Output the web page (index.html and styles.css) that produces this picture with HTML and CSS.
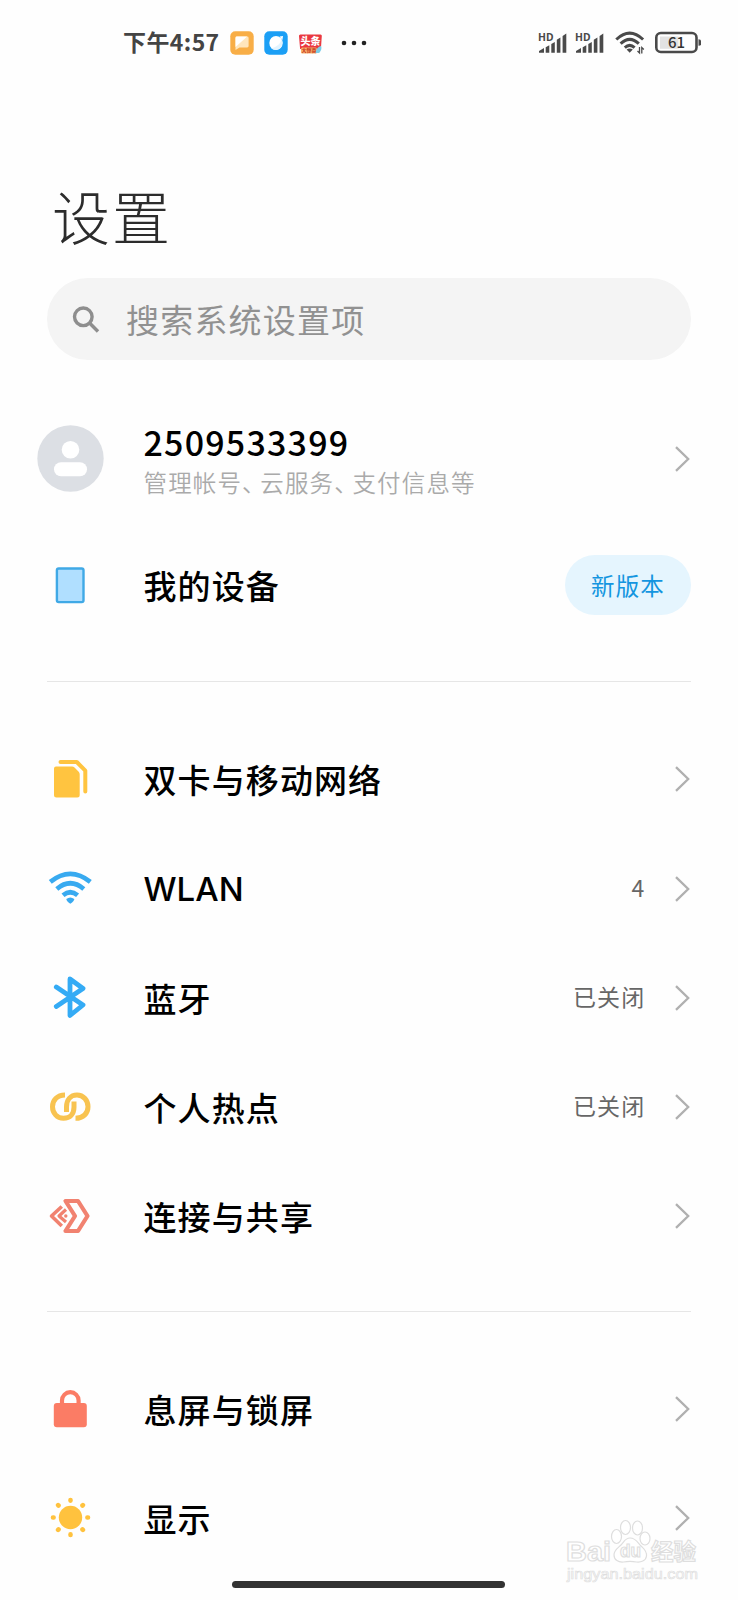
FILE: index.html
```html
<!DOCTYPE html>
<html lang="zh-CN">
<head>
<meta charset="utf-8">
<title>设置</title>
<link rel="stylesheet" href="styles.css">
</head>
<body>
<svg class="defs" width="0" height="0">
  <symbol id="chevron" viewBox="0 0 16 28"><path d="M2 2.200 14.200 14 2 25.800" fill="none" stroke="#b0b0b0" stroke-width="2.300"/></symbol>
</svg>
<div class="screen">
  <header class="status">
    <span class="time">下午4:57</span>
    <svg class="app" width="24" height="24" viewBox="0 0 24 24"><rect x=".3" y=".3" width="23.400" height="23.400" rx="5" fill="#f8ae47"/><path d="M5.500 7q0-1.400 1.400-1.400h10.300q1.400 0 1.400 1.400v8q0 1.400-1.400 1.400H9.500L5.500 19z" fill="#ffe6bd"/><path d="M5.500 16V7q0-1.400 1.400-1.400h10.300z" fill="#fff"/></svg>
    <svg class="app" width="24" height="24" viewBox="0 0 24 24"><rect x=".3" y=".3" width="23.400" height="23.400" rx="5" fill="#1b9ff5"/><ellipse cx="12" cy="12" rx="6.700" ry="7" fill="#fff"/><path d="M18 8q-3 8-11 9.500 3 1.800 6 1.300 7-2.300 5-10.800z" fill="#e2f4ff"/><path d="M15.500 5.400l3.500-.4-.6 4z" fill="#fff"/></svg>
    <svg class="app" width="25" height="24" viewBox="0 0 25 24"><path d="M2.500 3.500h20q1.500 0 1.300 1.500L22.900 18H2.100L1 5q-.2-1.500 1.500-1.500z" fill="#ea3840"/><text x="12.500" y="14" text-anchor="middle" class="news">头条</text><rect x="3" y="16.400" width="16" height="6" rx="1.500" fill="#f9b06a"/><text x="11" y="21.300" text-anchor="middle" class="news-sub">大惊喜</text><path d="M17.500 22q1-6 5.500-7 1.500 3-1.800 7z" fill="#7acde8"/></svg>
    <svg class="dots" width="26" height="6" viewBox="0 0 26 6"><g fill="#222"><circle cx="3" cy="3" r="2.300"/><circle cx="13" cy="3" r="2.300"/><circle cx="23" cy="3" r="2.300"/></g></svg>
    <span class="grow"></span>
    <svg class="sig" width="32" height="24" viewBox="0 0 32 24"><path d="M2 21.700v-1.600l5-3v4.600zM8.700 16.200l3.600-1.900v7.400H8.700zM14.300 13l3.500-2v10.700h-3.500zM19.800 8.800l3.600-2.200v15.100h-3.600zM25.600 4.900l3.700-2.400v19.200h-3.700z" fill="#4a4a4a"/><text x="1" y="9.500" class="hd" textLength="15.500" lengthAdjust="spacingAndGlyphs">HD</text></svg>
    <svg class="sig second" width="32" height="24" viewBox="0 0 32 24"><path d="M2 21.700v-1.600l5-3v4.600zM8.700 16.200l3.600-1.900v7.400H8.700zM14.300 13l3.500-2v10.700h-3.500zM19.800 8.800l3.600-2.200v15.100h-3.600zM25.600 4.900l3.700-2.400v19.200h-3.700z" fill="#4a4a4a"/><text x="1" y="9.500" class="hd" textLength="15.500" lengthAdjust="spacingAndGlyphs">HD</text></svg>
    <svg class="swifi" width="30" height="25" viewBox="0 0 30 25"><g fill="none" stroke="#4a4a4a" stroke-width="3"><path d="M1.300 9.500Q14.700-3.300 28.100 9.500"/><path d="M5.600 13.600q9.100-8.600 18.200 0"/><path d="M9.800 17.600q4.900-4.600 9.800 0"/></g><path d="M11.600 19.600q3.100-2.400 6.200 0l-3.100 3.200z" fill="#4a4a4a"/><path d="M24.500 17v6l-2-2M26.800 23.500v-6l2 2" fill="none" stroke="#4a4a4a" stroke-width="1.300"/></svg>
    <svg class="battery" width="48" height="24" viewBox="0 0 48 24"><rect x="1.300" y="2" width="40.200" height="19" rx="4.500" fill="#fff" stroke="#4a4a4a" stroke-width="2.600"/><path d="M5 5.500h18.500v12.300H5z" fill="#e2e2e2"/><path d="M43.500 8.300q2.500 0 2.500 1.500v3.500q0 1.500-2.500 1.500z" fill="#4a4a4a"/><text x="21.500" y="16.700" text-anchor="middle" class="level">61</text></svg>
  </header>

  <h1 class="title">设置</h1>

  <div class="search">
    <svg width="28" height="28" viewBox="0 0 28 28"><g fill="none" stroke="#8e8e8e" stroke-width="3.400"><circle cx="11.300" cy="11.800" r="8.800"/><path d="M17.800 18.300 26 26.500"/></g></svg>
    <span>搜索系统设置项</span>
  </div>

  <ul class="list account">
    <li class="row">
      <div class="icon"><svg class="avatar" width="67" height="67" viewBox="0 0 67 67"><circle cx="33.500" cy="33.500" r="33.200" fill="#dcdfe4"/><circle cx="33.500" cy="24.800" r="8.800" fill="#fff"/><rect x="17" y="37.300" width="33" height="14" rx="7" fill="#fff"/></svg></div>
      <div class="text"><div class="label number">2509533399</div><div class="sub">管理帐号<span class="tight">、</span>云服务<span class="tight">、</span>支付信息等</div></div>
      <svg class="chev" width="16" height="28"><use href="#chevron"/></svg>
    </li>
    <li class="row device">
      <div class="icon"><svg width="48" height="48" viewBox="0 0 48 48"><rect x="10.900" y="7.500" width="26.600" height="33.600" rx="1.800" fill="#b0dfff" stroke="#40a9e6" stroke-width="2.400"/></svg></div>
      <div class="label text">我的设备</div>
      <span class="badge">新版本</span>
    </li>
  </ul>

  <ul class="list">
    <li class="row">
      <div class="icon"><svg width="48" height="48" viewBox="0 0 48 48"><path d="M10 11.500h16q1.500 0 2.500 1l4.200 4.200q1 1 1 2.500V40q0 2.500-2.500 2.500H10.500Q8 42.500 8 40V13.500q0-2 2-2z" fill="#ffc440"/><path d="M14.500 7h16.300l8.500 8.600V36.500" fill="none" stroke="#ffc440" stroke-width="4" stroke-linecap="round" stroke-linejoin="round"/></svg></div>
      <div class="label text">双卡与移动网络</div>
      <svg class="chev" width="16" height="28"><use href="#chevron"/></svg>
    </li>
    <li class="row">
      <div class="icon"><svg width="48" height="48" viewBox="0 0 48 48"><g fill="none" stroke="#38aaf0" stroke-width="4.700"><path d="M4.300 16.800Q24.300 .8 44.300 16.800"/><path d="M10.800 24q13.500-11.500 27 0"/><path d="M17 30.200q7.300-6 14.600 0"/></g><path d="M20.300 34q4-3 8 0 0 2.200-4 4.700-4-2.500-4-4.700z" fill="#38aaf0"/></svg></div>
      <div class="label text latin">WLAN</div>
      <span class="value">4</span>
      <svg class="chev" width="16" height="28"><use href="#chevron"/></svg>
    </li>
    <li class="row">
      <div class="icon"><svg width="48" height="48" viewBox="0 0 48 48"><path d="M10.300 13 37 31 24 41.500V5L37 14.500 10.300 32.500" fill="none" stroke="#34abf5" stroke-width="4.800" stroke-linecap="round" stroke-linejoin="round"/></svg></div>
      <div class="label text">蓝牙</div>
      <span class="value">已关闭</span>
      <svg class="chev" width="16" height="28"><use href="#chevron"/></svg>
    </li>
    <li class="row">
      <div class="icon"><svg width="48" height="48" viewBox="0 0 48 48"><g fill="none" stroke="#f8c350" stroke-width="5"><path d="M19 12C11 12 6.500 17.500 6.500 23.700S11 35.300 17.500 35.300 28 31 28 24v-5.500"/><path d="M29.500 35.300C37.500 35.300 42 30 42 23.700S37.500 12 31 12 20.500 17 20.500 24v5"/></g></svg></div>
      <div class="label text">个人热点</div>
      <span class="value">已关闭</span>
      <svg class="chev" width="16" height="28"><use href="#chevron"/></svg>
    </li>
    <li class="row">
      <div class="icon"><svg width="48" height="48" viewBox="0 0 48 48"><g fill="none" stroke="#f18270" stroke-width="4.200" stroke-linejoin="round"><path d="M19.500 9h12.500l9.500 15-9.500 15H19.500l9.500-15z"/><path d="M15.800 14.500 5.500 24l10.300 10" stroke-width="3.600"/><path d="M20 17.500 13 24l7 6" stroke-width="3.200"/></g><circle cx="19.800" cy="24" r="1.700" fill="#f18270"/></svg></div>
      <div class="label text">连接与共享</div>
      <svg class="chev" width="16" height="28"><use href="#chevron"/></svg>
    </li>
  </ul>

  <ul class="list last">
    <li class="row">
      <div class="icon"><svg width="48" height="48" viewBox="0 0 48 48"><rect x="7.800" y="18" width="33" height="24.200" rx="3" fill="#fb7c65"/><path d="M16 20v-4.500a8.300 8.300 0 0 1 16.600 0V20" fill="none" stroke="#fb7c65" stroke-width="4.200"/></svg></div>
      <div class="label text">息屏与锁屏</div>
      <svg class="chev" width="16" height="28"><use href="#chevron"/></svg>
    </li>
    <li class="row">
      <div class="icon"><svg width="48" height="48" viewBox="0 0 48 48"><circle cx="24.500" cy="23.500" r="11.700" fill="#ffc23e"/><path d="M24.500 6v.6M24.500 40.400v.6M7 23.500h.6M41.400 23.500h.6M12.100 11.100l.4.400M36.500 35.500l.4.400M12.100 35.900l.4-.4M36.500 11.500l.4-.4" stroke="#ffc23e" stroke-width="4.600" stroke-linecap="round"/></svg></div>
      <div class="label text">显示</div>
      <svg class="chev" width="16" height="28"><use href="#chevron"/></svg>
    </li>
  </ul>

  <svg class="watermark" width="150" height="70" viewBox="0 0 150 70">
    <g fill="#fff" stroke="#dedede" stroke-width="1.200">
      <text x="4" y="42" class="wm-brand" textLength="45" lengthAdjust="spacingAndGlyphs">Bai</text>
      <ellipse cx="54.500" cy="17.500" rx="5" ry="7"/><ellipse cx="63.500" cy="8.500" rx="5" ry="7"/><ellipse cx="75.500" cy="9" rx="5" ry="7"/><ellipse cx="83" cy="19.500" rx="5" ry="6.500"/>
      <path d="M68 19c6 0 8 5 11 8s6 5 5.500 10-6 6.500-10 6c-5-1-8-1-13 0-5 .5-9.500-2-9.500-7s4-7 7-10 4-7 9-7z"/>
      <text x="58" y="38" class="wm-du" textLength="21" lengthAdjust="spacingAndGlyphs">du</text>
      <text x="89" y="41" class="wm-cn" textLength="45" lengthAdjust="spacingAndGlyphs">经验</text>
      <text x="5" y="60" class="wm-url" textLength="131" lengthAdjust="spacingAndGlyphs">jingyan.baidu.com</text>
    </g>
  </svg>
  <div class="home"></div>
</div>
</body>
</html>
```
FILE: styles.css
```css
* { box-sizing: border-box; }
body {
  margin: 0;
  background: #fefefe;
  font-family: "Noto Sans CJK SC", "Noto Sans", sans-serif;
  color: #000;
}
.defs { position: absolute; }
.screen {
  position: relative;
  width: 738px;
  height: 1600px;
  overflow: hidden;
}
.status {
  display: flex;
  align-items: center;
  height: 85px;
  padding: 0 35px 0 123px;
}
.time {
  width: 107px;
  margin-top: -3px;
  font-size: 23px;
  font-weight: 700;
  letter-spacing: 0.4px;
  line-height: 30px;
  color: #444;
  white-space: nowrap;
}
.app { margin-right: 10px; }
.dots { margin-left: 8px; }
.grow { flex: 1; }
.sig { margin-right: 5px; }
.second { margin-right: 9px; }
.swifi { margin-right: 10px; }
.hd { font: 700 10.5px "Noto Sans", sans-serif; fill: #4a4a4a; }
.news { font: 900 10px "Noto Sans CJK SC", sans-serif; fill: #fff; }
.news-sub { font: 700 5px "Noto Sans CJK SC", sans-serif; fill: #c2331c; }
.level { font: 500 15px "Noto Sans CJK SC", sans-serif; fill: #333; }
.title {
  height: 193px;
  margin: 0;
  padding: 86px 0 0 52px;
  font-size: 58px;
  font-weight: 300;
  line-height: 88px;
  letter-spacing: 2px;
  color: #2c2c2c;
}
.search {
  display: flex;
  align-items: center;
  gap: 26px;
  height: 82px;
  margin: 0 47px;
  padding: 0 0 0 25px;
  border-radius: 41px;
  background: #f4f4f4;
  font-size: 33px;
  font-weight: 400;
  letter-spacing: 1.2px;
  color: #919191;
}
.list {
  margin: 0 47px;
  padding: 43px 0 40px;
  border-top: 1px solid #e6e6e6;
  list-style: none;
}
.account {
  padding: 44px 0 41px;
  border-top: 0;
}
.last { padding-top: 42px; }
.row {
  display: flex;
  align-items: center;
  height: 109.3px;
}
.device { margin-top: 17px; }
.icon {
  display: flex;
  justify-content: center;
  width: 48px;
  margin: 0 49.5px 0 -1px;
}
.avatar { flex: none; }
.text { flex: 1; }
.chev { margin-right: 1.5px; }
.label {
  font-size: 33px;
  font-weight: 500;
  letter-spacing: 1.1px;
  line-height: 48px;
}
.latin {
  font-family: Inter, "Noto Sans CJK SC", sans-serif;
  letter-spacing: 0;
}
.number {
  margin-top: 6px;
  font-size: 34px;
  line-height: 36px;
  letter-spacing: 1.2px;
}
.sub {
  font-size: 23.5px;
  font-weight: 350;
  letter-spacing: 1.15px;
  line-height: 36px;
  margin-top: 4px;
  color: #aaa;
}
.tight { letter-spacing: -5.3px; }
.value {
  margin: -4px 28px 0 0;
  font-size: 23px;
  letter-spacing: 1.2px;
  color: #666;
}
.badge {
  width: 126px;
  height: 60px;
  border-radius: 30px;
  background: #e5f5fe;
  color: #1495e0;
  font-size: 23.5px;
  letter-spacing: 1.2px;
  line-height: 60px;
  text-align: center;
}
.watermark {
  position: absolute;
  left: 562px;
  top: 1519px;
}
.wm-brand { font: 700 28px "Liberation Sans", sans-serif; }
.wm-du { font: 700 19px "Liberation Sans", sans-serif; }
.wm-cn { font: 700 23px "Noto Sans CJK SC", sans-serif; }
.wm-url { font: 400 15px "Liberation Sans", sans-serif; stroke-width: .7px; }
.home {
  position: absolute;
  left: 232px;
  top: 1581px;
  width: 273px;
  height: 7px;
  border-radius: 4px;
  background: #333;
}
```
